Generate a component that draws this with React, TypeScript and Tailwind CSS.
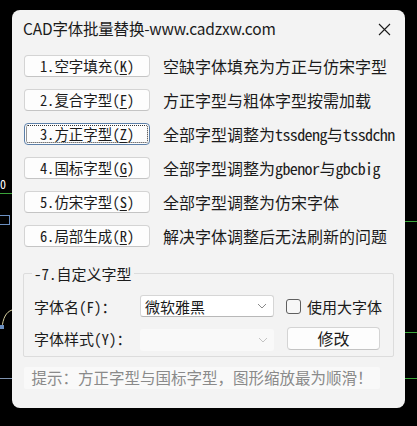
import React, { useState } from 'react';

const cjk = '"Noto Sans Mono CJK SC", "Noto Sans CJK SC", "Liberation Mono", monospace';
const ui = '"Noto Sans CJK SC", "Noto Sans", sans-serif';

interface Action {
  num: string;
  name: string;
  key: string;
  desc: React.ReactNode;
}

const actions: Action[] = [
  { num: '1.', name: '空字填充', key: 'K', desc: '空缺字体填充为方正与仿宋字型' },
  { num: '2.', name: '复合字型', key: 'F', desc: '方正字型与粗体字型按需加载' },
  {
    num: '3.',
    name: '方正字型',
    key: 'Z',
    desc: (
      <>
        全部字型调整为<span className="tracking-[-0.6px]">tssdeng</span>与<span className="tracking-[-0.6px]">tssdchn</span>
      </>
    ),
  },
  {
    num: '4.',
    name: '国标字型',
    key: 'G',
    desc: (
      <>
        全部字型调整为<span className="tracking-[-0.6px]">gbenor</span>与<span className="tracking-[-0.6px]">gbcbig</span>
      </>
    ),
  },
  { num: '5.', name: '仿宋字型', key: 'S', desc: '全部字型调整为仿宋字体' },
  { num: '6.', name: '局部生成', key: 'R', desc: '解决字体调整后无法刷新的问题' },
];

function Chevron({ light = false }: { light?: boolean }) {
  return (
    <svg width="10" height="6" viewBox="0 0 10 6" className="shrink-0">
      <path d="M1 1l4 4 4-4" fill="none" stroke={light ? '#c4c4c4' : '#8a8a8a'} strokeWidth="1" />
    </svg>
  );
}

export default function App() {
  const [focused, setFocused] = useState(2);
  const [bigFont, setBigFont] = useState(false);

  return (
    <div className="relative w-[417px] h-[426px] bg-black overflow-hidden" style={{ fontFamily: cjk }}>
      {/* CAD drawing behind the dialog */}
      <span className="absolute left-0 top-[178px] text-[12px] text-white leading-none">0</span>
      <div className="absolute left-0 top-[193px] w-[12px] h-px bg-[#3aa43a]" />
      <div className="absolute left-[-2px] top-[215px] w-[12px] h-[10px] border border-[#6b8fc0]" />
      <svg className="absolute left-0 top-[308px]" width="12" height="22" viewBox="0 0 12 22">
        <path d="M2 20 C3 10 6 4 12 2" fill="none" stroke="#d8d0a0" strokeWidth="1" />
        <rect x="0" y="17" width="4" height="4" fill="#6b8fc0" />
      </svg>
      <div className="absolute left-0 top-[378px] w-[12px] h-px bg-[#7f93b0]" />
      <div className="absolute right-0 top-[221px] w-[12px] h-px bg-[#3aa43a]" />
      <div className="absolute right-0 top-[332px] w-[12px] h-px bg-[#3aa43a]" />
      <div className="absolute right-0 top-[378px] w-[12px] h-px bg-[#3aa43a]" />

      {/* Dialog */}
      <div className="absolute left-[12px] top-[10px] w-[393px] h-[398px] rounded-[8px] bg-[#f3f3f3] text-[#1b1b1b] flex flex-col">
        <div className="h-[38px] flex items-center justify-between pl-[11px] pr-[14px]">
          <span className="text-[15.5px] leading-none tracking-[-0.2px]" style={{ fontFamily: ui }}>
            CAD字体批量替换-www.cadzxw.com
          </span>
          <svg width="13" height="13" viewBox="0 0 13 13">
            <path d="M1 1l11 11M12 1L1 12" stroke="#1b1b1b" strokeWidth="1.1" />
          </svg>
        </div>

        <div className="flex flex-col gap-[12px] pl-[12px] mt-[7px]">
          {actions.map((a, i) => (
            <div key={a.key} className="flex items-center gap-[13px] h-[22px]">
              <button
                onClick={() => setFocused(i)}
                className={
                  i === focused
                    ? 'w-[126px] h-[22px] rounded-[4px] border border-[#5c7fa8] bg-[#fdfdfd] p-[1px]'
                    : 'w-[126px] h-[22px] rounded-[4px] border border-[#d4d4d4] border-b-[#c4c4c4] bg-[#fdfdfd]'
                }
              >
                <span
                  className={
                    i === focused
                      ? 'w-full h-full flex items-center justify-center border border-dotted border-[#333] rounded-[2px] text-[14.5px] leading-none'
                      : 'w-full h-full flex items-center justify-center text-[14.5px] leading-none'
                  }
                >
                  {a.num}{a.name}(<span className="underline underline-offset-2">{a.key}</span>)
                </span>
              </button>
              <span className="text-[16px] leading-none whitespace-nowrap">{a.desc}</span>
            </div>
          ))}
        </div>

        {/* Group box */}
        <fieldset className="mt-[19px] mx-[11px] h-[91px] border border-[#dcdcdc] rounded-[2px] pl-[10px] pr-0 pb-0 pt-0">
          <legend className="ml-[-2px] px-[2px] text-[15px] leading-none">-7.自定义字型</legend>
          <div className="flex items-center h-[22px] mt-[14px]">
            <span className="w-[106px] shrink-0 text-[15px] leading-none whitespace-nowrap">字体名(F)：</span>
            <div className="w-[134px] shrink-0 h-[22px] bg-white border border-[#d6d6d6] border-b-[#b8b8b8] rounded-[3px] flex items-center justify-between pl-[4px] pr-[6px]">
              <span className="text-[15px] leading-none">微软雅黑</span>
              <Chevron />
            </div>
            <label className="ml-[12px] flex items-center gap-[6px] cursor-pointer whitespace-nowrap">
              <span
                onClick={() => setBigFont(!bigFont)}
                className="w-[15px] h-[15px] shrink-0 rounded-[3px] border border-[#5f5f5f] bg-[#f7f7f7] flex items-center justify-center"
              >
                {bigFont && (
                  <svg width="10" height="8" viewBox="0 0 10 8">
                    <path d="M1 4l3 3 5-6" fill="none" stroke="#1b1b1b" strokeWidth="1.3" />
                  </svg>
                )}
              </span>
              <span className="text-[15px] leading-none">使用大字体</span>
            </label>
          </div>
          <div className="flex items-center h-[24px] mt-[9px]">
            <span className="w-[106px] shrink-0 text-[15px] leading-none whitespace-nowrap">字体样式(Y)：</span>
            <div className="w-[134px] shrink-0 h-[22px] mt-[3px] bg-[#f9f9f9] rounded-[3px] flex items-center justify-end pr-[6px]">
              <Chevron light />
            </div>
            <button className="ml-[13px] w-[93px] shrink-0 h-[23px] rounded-[4px] border border-[#d4d4d4] border-b-[#c4c4c4] bg-[#fdfdfd] text-[16px] leading-none">
              修改
            </button>
          </div>
        </fieldset>

        <div className="mt-[10px] ml-[12px] w-[356px] h-[22px] rounded-[2px] bg-[#f9f9f9] flex items-center justify-center text-[15.5px] leading-none text-[#8a8a8a] whitespace-nowrap">
          提示：方正字型与国标字型，图形缩放最为顺滑！
        </div>
      </div>
    </div>
  );
}
